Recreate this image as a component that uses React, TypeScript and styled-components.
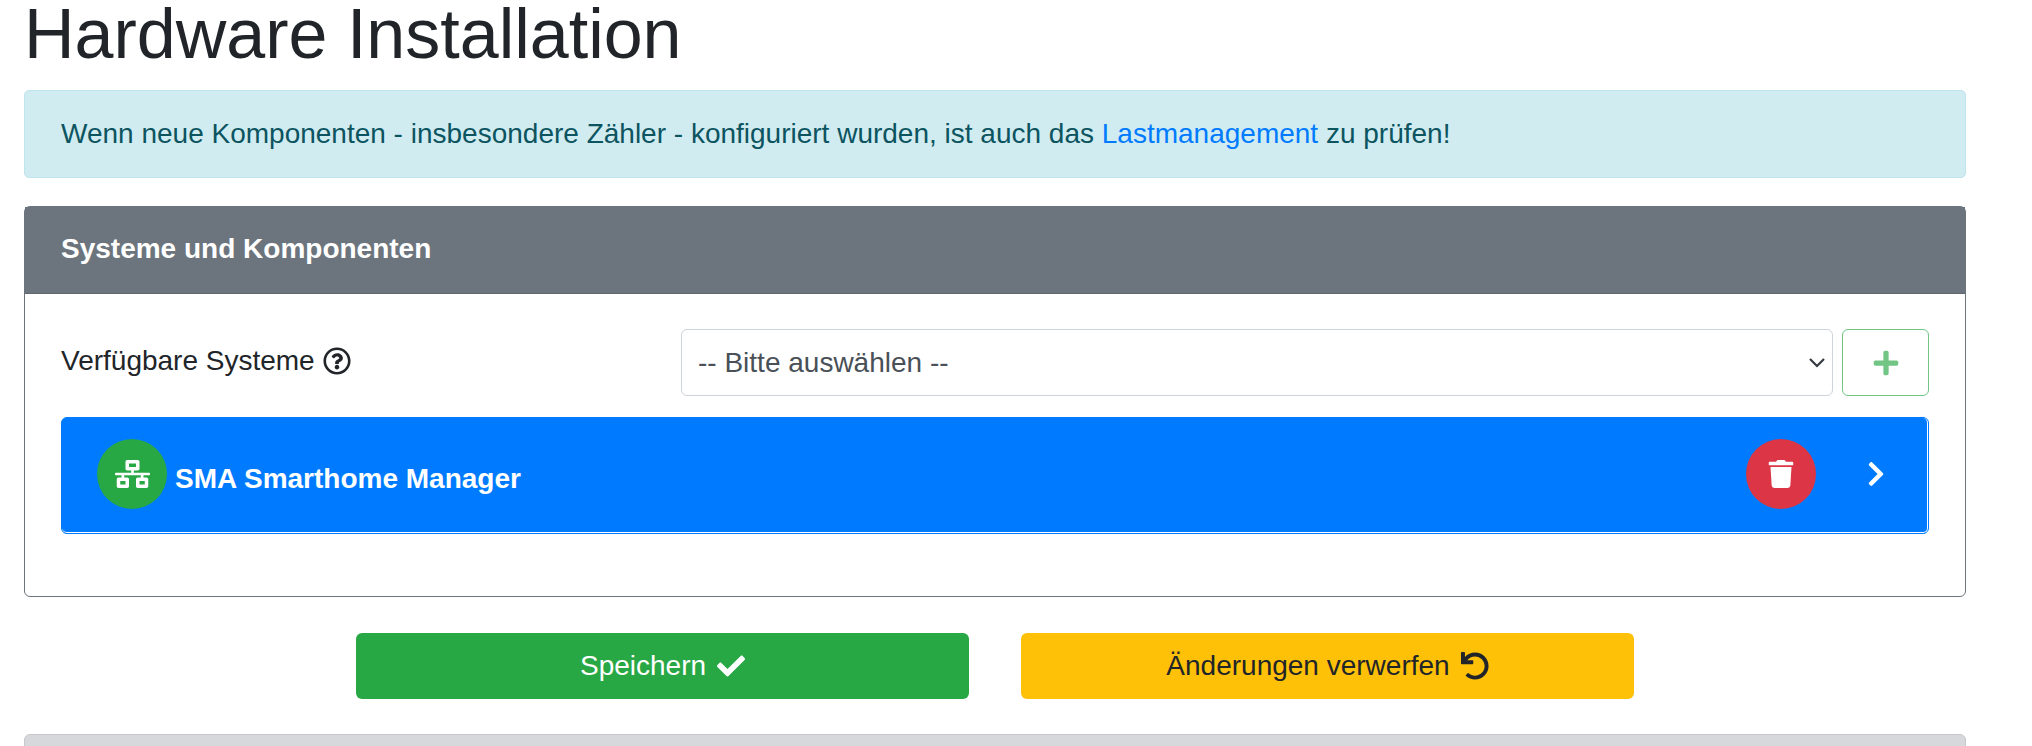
import React from 'react';
import styled, { createGlobalStyle } from 'styled-components';
import {
  FaCheck,
  FaChevronRight,
  FaPlus,
  FaRegQuestionCircle,
  FaTrash,
  FaUndo,
} from 'react-icons/fa';

const GlobalStyle = createGlobalStyle`
  html, body {
    margin: 0;
    height: 746px;
    overflow: hidden;
    background: #fff;
  }
  body {
    font-family: "Liberation Sans", Arial, sans-serif;
    font-size: 28px;
    line-height: 42px;
    color: #212529;
  }
`;

const Page = styled.div`
  padding: 0 66px 0 24px;
  height: 746px;
  overflow: hidden;
`;

const Title = styled.h1`
  margin: 0;
  height: 90px;
  font-size: 70px;
  font-weight: 400;
  line-height: 68px;
`;

const Alert = styled.div`
  box-sizing: border-box;
  height: 88px;
  padding: 22px 36px;
  margin-bottom: 28px;
  background: #d1ecf1;
  border: 1px solid #bee5eb;
  border-radius: 5px;
  color: #0c5460;
`;

const AlertLink = styled.a`
  color: #007bff;
  text-decoration: none;
`;

const Card = styled.section`
  box-sizing: border-box;
  height: 391px;
  border: 1px solid #6c757d;
  border-radius: 6px;
`;

const CardHeader = styled.header`
  box-sizing: border-box;
  height: 87px;
  padding: 21px 36px;
  background: #6c757d;
  border-bottom: 1px solid #5f6871;
  color: #fff;
  font-weight: 700;
`;

const CardBody = styled.div`
  padding: 35px 36px 0;
`;

const FormRow = styled.div`
  display: grid;
  grid-template-columns: 611px 1fr 87px;
  column-gap: 9px;
  margin-bottom: 21px;
`;

const FormLabel = styled.label`
  display: flex;
  align-items: center;
  gap: 8px;
  height: 67px;
  margin-right: -9px;
  padding-bottom: 4px;
  box-sizing: border-box;
`;

const HelpIcon = styled(FaRegQuestionCircle)`
  font-size: 28px;
`;

const Select = styled.select`
  appearance: none;
  box-sizing: border-box;
  width: 100%;
  height: 67px;
  padding: 0 48px 0 16px;
  background: #fff
    url("data:image/svg+xml,%3csvg xmlns='http://www.w3.org/2000/svg' width='16' height='10' viewBox='0 0 16 10'%3e%3cpath fill='none' stroke='%23343a40' stroke-width='2.2' d='M1 1l7 7 7-7'/%3e%3c/svg%3e")
    no-repeat right 7px center;
  border: 1px solid #ced4da;
  border-radius: 6px;
  color: #495057;
  font-family: inherit;
  font-size: 28px;
`;

const AddButton = styled.button`
  display: flex;
  align-items: center;
  justify-content: center;
  height: 67px;
  padding: 0;
  background: #fff;
  border: 1px solid #28a745;
  border-radius: 6px;
  color: #28a745;
  font-size: 28px;
  opacity: 0.65;
`;

const Device = styled.div`
  box-sizing: border-box;
  height: 117px;
  background: #007bff;
  border: 1px solid #007bff;
  border-radius: 6px;
`;

const DeviceHeader = styled.div`
  box-sizing: border-box;
  display: flex;
  align-items: center;
  gap: 8px;
  height: 115px;
  padding: 0 0 2px 35px;
  border-right: 1px solid #fff;
  border-bottom: 1px solid #fff;
  border-radius: 0 5px 5px 5px;
  color: #fff;
  font-weight: 700;
`;

const RoundIcon = styled.span<{ $color: string }>`
  display: flex;
  align-items: center;
  justify-content: center;
  flex: none;
  width: 70px;
  height: 70px;
  border-radius: 50%;
  background: ${(p) => p.$color};
  color: #fff;
  font-size: 28px;
`;

const DeviceName = styled.span`
  flex: 1;
  padding-top: 10px;
`;

const Expand = styled.span`
  display: flex;
  justify-content: center;
  width: 103px;
  font-size: 28px;
`;

const Actions = styled.div`
  display: flex;
  justify-content: center;
  gap: 52px;
  padding: 36px 0 35px;
`;

const ActionButton = styled.button<{ $bg: string; $fg: string }>`
  display: flex;
  align-items: center;
  justify-content: center;
  gap: 11px;
  width: 613px;
  height: 66px;
  padding: 0;
  background: ${(p) => p.$bg};
  border: 0;
  border-radius: 6px;
  color: ${(p) => p.$fg};
  font-family: inherit;
  font-size: 28px;
  svg {
    font-size: 28px;
  }
`;

const NextCard = styled.div`
  box-sizing: border-box;
  height: 80px;
  background: #d6d8db;
  border: 1px solid #c6c8ca;
  border-radius: 6px;
`;

const NetworkIcon = () => (
  <svg width="35" height="28" viewBox="0 0 640 512" fill="currentColor" aria-hidden="true">
    <path d="M640 264v-16c0-8.84-7.16-16-16-16H344v-40h72c17.67 0 32-14.33 32-32V32c0-17.67-14.33-32-32-32H224c-17.67 0-32 14.33-32 32v128c0 17.67 14.33 32 32 32h72v40H16c-8.84 0-16 7.16-16 16v16c0 8.84 7.16 16 16 16h104v40H64c-17.67 0-32 14.33-32 32v128c0 17.67 14.33 32 32 32h160c17.67 0 32-14.33 32-32V352c0-17.67-14.33-32-32-32h-56v-40h304v40h-56c-17.67 0-32 14.33-32 32v128c0 17.67 14.33 32 32 32h160c17.67 0 32-14.33 32-32V352c0-17.67-14.33-32-32-32h-56v-40h104c8.84 0 16-7.16 16-16zM256 128V64h128v64H256zm-64 320H96v-64h96v64zm352 0h-96v-64h96v64z" />
  </svg>
);

const App: React.FC = () => (
  <Page>
    <GlobalStyle />
    <Title>Hardware Installation</Title>
    <Alert>
      Wenn neue Komponenten - insbesondere Zähler - konfiguriert wurden, ist auch das{' '}
      <AlertLink href="#">Lastmanagement</AlertLink> zu prüfen!
    </Alert>
    <Card>
      <CardHeader>Systeme und Komponenten</CardHeader>
      <CardBody>
        <FormRow>
          <FormLabel>
            Verfügbare Systeme <HelpIcon />
          </FormLabel>
          <Select defaultValue="">
            <option value="">-- Bitte auswählen --</option>
          </Select>
          <AddButton aria-label="add">
            <FaPlus />
          </AddButton>
        </FormRow>
        <Device>
          <DeviceHeader>
            <RoundIcon $color="#28a745">
              <NetworkIcon />
            </RoundIcon>
            <DeviceName>SMA Smarthome Manager</DeviceName>
            <RoundIcon $color="#dc3545">
              <FaTrash />
            </RoundIcon>
            <Expand>
              <FaChevronRight />
            </Expand>
          </DeviceHeader>
        </Device>
      </CardBody>
    </Card>
    <Actions>
      <ActionButton $bg="#28a745" $fg="#fff">
        Speichern <FaCheck />
      </ActionButton>
      <ActionButton $bg="#ffc107" $fg="#212529">
        Änderungen verwerfen <FaUndo />
      </ActionButton>
    </Actions>
    <NextCard />
  </Page>
);

export default App;
